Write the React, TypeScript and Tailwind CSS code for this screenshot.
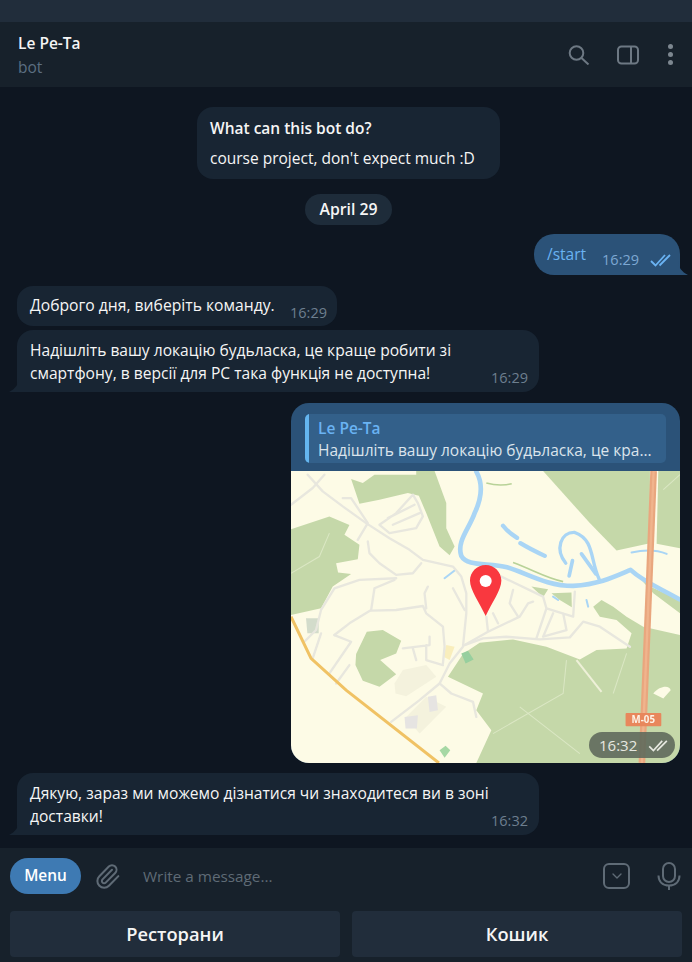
import { Paperclip, ChevronDown } from 'lucide-react'

const font = { fontFamily: '"Open Sans", sans-serif' }

function Checks({ className }: { className: string }) {
  return (
    <svg viewBox="0 0 22 14" fill="none" stroke="currentColor" strokeWidth="1.8" className={className}>
      <path d="M1 8l4.500 4.500L15 2" />
      <path d="M9.500 12.500L20 2" />
    </svg>
  )
}

function TailLeft() {
  return (
    <svg viewBox="0 0 10 14" className="absolute -left-[8px] bottom-0 h-[14px] w-[10px] fill-[#182533]">
      <path d="M10 0C10 6 6 11 0 14H10Z" />
    </svg>
  )
}

function TailRight() {
  return (
    <svg viewBox="0 0 10 14" className="absolute -right-[8px] bottom-0 h-[14px] w-[10px] fill-[#2b5278]">
      <path d="M0 0C0 6 4 11 10 14H0Z" />
    </svg>
  )
}

function MapPreview() {
  return (
    <svg viewBox="35 214 1165 874" preserveAspectRatio="none" className="block h-[292px] w-full bg-[#fdfbe6] blur-[0.4px]">
      {/* woods */}
      <g fill="#c5d8a9">
        <path d="M790 214L1110 214V430L1010 452L930 370Z" />
        <path d="M1135 214H1200V445L1130 432Z" />
        <path d="M215 238L250 250L285 225H410V214H465L500 310L500 385L525 440L510 466L480 440L440 340L418 288L385 280L300 300L240 312Z" />
        <path d="M35 388L150 350L210 376L195 405L240 435L235 478L170 490L176 518L215 522L160 560L125 625L35 645Z" />
        <path d="M230 762L262 695L310 690L365 722L350 760L302 780L350 822L300 860L250 842L228 795Z" />
        <path d="M505 830L550 762L600 728L700 718L800 740L900 778L950 750L1040 745L1055 700L1010 660L960 650L940 620L965 600L1000 620L1040 650L1090 680L1200 705V1088H590L635 990L590 930L610 880Z" />
        <path d="M755 560L805 568L790 592ZM815 580L875 578L876 622L840 600Z" />
        <path d="M1075 530L1110 560L1200 600V640L1120 580Z" />
      </g>
      <g fill="#f4f2dd">
        <path d="M345 850L370 810L440 795L470 830L380 888L348 880Z" />
        <path d="M380 950L440 890L500 920L420 1000Z" />
      </g>
      <path d="M1120 880C1140 855 1170 855 1172 870L1150 895Z" fill="#fdfbe6" />
      <path d="M80 655H118V700H84Z" fill="#d3dccb" />
      <path d="M545 760L565 752L582 778L558 790Z" fill="#97cf9e" />
      <path d="M480 1050L498 1036L512 1050L495 1072Z" fill="#a6d8a4" />
      <path d="M500 735L525 740L510 780L492 770Z" fill="#f9eebc" />
      <path d="M445 890L470 885L475 930L450 935Z M375 950L415 945L412 985L378 985Z" fill="#e6e4e2" />

      {/* water */}
      <g fill="none" stroke="#a9d5f5" strokeLinecap="round" strokeLinejoin="round">
        <path strokeWidth="14" d="M590 216C612 255 604 300 585 340C570 385 530 425 545 468C562 500 625 488 682 502C742 520 800 558 880 558C960 552 1000 532 1052 510C1090 545 1130 560 1198 598" />
        <path strokeWidth="10" d="M958 538C930 480 945 420 885 398C842 396 825 450 858 490" />
        <path strokeWidth="13" d="M670 378C685 398 695 404 712 414M722 430C745 444 760 452 795 468" />
        <path strokeWidth="11" d="M878 482L868 528M905 462L948 522" />
        <path strokeWidth="6" d="M1055 458C1090 450 1130 450 1160 462M495 535L525 512M920 600L925 620M820 590L835 600" />
      </g>
      <path d="M620 250C650 258 670 258 696 252M700 488C760 510 800 535 850 545" fill="none" stroke="#b8d298" strokeWidth="5" />

      {/* streets */}
      <g fill="none" stroke="#e8e7de" strokeWidth="7" strokeLinecap="round" strokeLinejoin="round">
        <path d="M85 225L130 275L190 320L260 370L330 415L390 450L430 480L520 500L545 530L560 580L560 640L550 740L510 790L480 850L420 900L335 965" />
        <path d="M35 315L100 265L135 225M190 295L215 295L265 370L235 420" />
        <path d="M300 375L350 340L400 285L415 310L430 350L410 385L330 400L300 375M325 355L405 315M340 375L420 340" />
        <path d="M265 425L270 460L300 490L350 525L400 520L425 490" />
        <path d="M350 535L240 540L165 565L125 630L110 690L75 725" />
        <path d="M345 540L285 565L275 630L210 670L165 705" />
        <path d="M275 632L350 630L430 618L440 640L490 680L495 740L490 790M440 625L435 580L445 560" />
        <path d="M165 705L215 725L150 820M125 700L100 775M210 795L170 850" />
        <path d="M370 745L450 735L450 710M400 745L410 780M440 735L440 780L490 795" />
        <path d="M480 850L515 880L580 905L590 950" />
        <path d="M555 735L610 715L680 710L780 718L870 712L910 665L960 680L1050 740" />
        <path d="M620 650L625 695L555 735M640 640L655 670M625 695L720 650L745 610L760 605M700 570L690 610L715 650" />
        <path d="M665 530L790 590L800 625L880 650L885 575M800 625L770 715M820 640L790 710L860 690L850 640" />
        <path d="M520 565L555 630" />
      </g>
      <g fill="none" stroke="#dbe7c4" strokeWidth="3">
        <path d="M35 520L120 470L150 400M640 1000L850 880L860 780M720 920L900 1060M1000 880L1040 760M1150 270L1200 225" />
      </g>
      <path d="M890 780L965 875" fill="none" stroke="#eef0d8" strokeWidth="6" />

      {/* motorway + trunk road */}
      <path d="M35 650L95 775L200 870L478 1088" fill="none" stroke="#f0c264" strokeWidth="9" />
      <path d="M1121 214L1086 1088" fill="none" stroke="#e9a67e" strokeWidth="20" />
      <path d="M1121 214L1086 1088" fill="none" stroke="#f0b48d" strokeWidth="7" />
      <rect x="1037" y="938" width="107" height="40" rx="3" fill="#e8875c" />
      <text x="1090" y="968" textAnchor="middle" fontSize="29" fontWeight="700" fill="#fdf3e8">M-05</text>

      {/* pin */}
      <path d="M618 495C592 495 571 516 571 542C571 570 600 610 618 648C636 610 665 570 665 542C665 516 644 495 618 495Z" fill="#f9383f" />
      <circle cx="618" cy="543" r="18" fill="#fff" />
    </svg>
  )
}

export default function App() {
  return (
    <div style={font} className="flex h-[962px] w-[692px] flex-col overflow-hidden bg-[#0e1621] text-[15.5px] text-[#f5f5f5]">
      <div className="h-[22px] shrink-0 bg-[#212d3b]" />

      <header className="flex h-[65px] shrink-0 items-center justify-between bg-[#17212b] pl-[18px] pr-[19px]">
        <div>
          <p className="leading-[20px] font-semibold">Le Pe-Ta</p>
          <p className="mt-[4px] leading-[20px] text-[#5c6f82]">bot</p>
        </div>
        <div className="flex items-center text-[#6d7883]">
          <svg viewBox="0 0 22 20" fill="none" stroke="currentColor" strokeWidth="2" className="h-[20px] w-[22px]">
            <circle cx="8.500" cy="8" r="6.800" />
            <path d="M13.500 13l7 6.500" />
          </svg>
          <svg viewBox="0 0 24 20" fill="none" stroke="currentColor" strokeWidth="2" className="ml-[26px] h-[20px] w-[24px]">
            <rect x="2" y="1.500" width="20" height="17" rx="3.500" />
            <path d="M15 1.500v17" />
          </svg>
          <div className="ml-[28px] flex flex-col gap-[2.500px]">
            <span className="h-[5.500px] w-[5.500px] rounded-full bg-[#7d8790]" />
            <span className="h-[5.500px] w-[5.500px] rounded-full bg-[#7d8790]" />
            <span className="h-[5.500px] w-[5.500px] rounded-full bg-[#7d8790]" />
          </div>
        </div>
      </header>

      <main className="flex min-h-0 flex-1 flex-col pt-[20px]">
        <div className="ml-[197px] flex h-[72px] w-[303px] flex-col justify-center rounded-[16px] bg-[#182533] px-[13px] leading-[20px]">
          <p className="font-semibold">What can this bot do?</p>
          <p className="mt-[10px]">course project, don't expect much :D</p>
        </div>

        <div className="ml-[305px] mt-[15px] flex h-[31px] w-[87px] items-center justify-center rounded-full bg-[#1e2c3a] text-[15.800px] font-semibold">
          April 29
        </div>

        <div className="relative mt-[9px] mr-[12px] flex h-[41px] w-[146px] items-center self-end rounded-l-[20px] rounded-tr-[20px] bg-[#2b5278] pl-[13px]">
          <span className="text-[#6ab3f3]">/start</span>
          <span className="ml-[16px] mt-[10px] text-[14.500px] text-[#7da8d3]">16:29</span>
          <Checks className="ml-[11px] mt-[10px] h-[14px] w-[22px] text-[#6ab3f3]" />
          <TailRight />
        </div>

        <div className="mt-[11px] ml-[17px] flex h-[40px] w-[320px] items-center rounded-[16px] bg-[#182533] pl-[13px]">
          <span className="text-[15.700px]">Доброго дня, виберіть команду.</span>
          <span className="ml-auto mt-[13px] mr-[10px] text-[14.500px] text-[#6d7f8f]">16:29</span>
        </div>

        <div className="relative mt-[4px] ml-[17px] h-[62px] w-[522px] rounded-[16px] rounded-bl-none bg-[#182533] pl-[13px] pt-[9px]">
          <p className="text-[15.600px] leading-[23px]">
            Надішліть вашу локацію будьласка, це краще робити зі
            <br />
            смартфону, в версії для PC така функція не доступна!
          </p>
          <span className="absolute right-[11px] bottom-[3px] text-[14.500px] text-[#6d7f8f]">16:29</span>
          <TailLeft />
        </div>

        <div className="mt-[11px] mr-[12px] w-[389px] self-end overflow-hidden rounded-[18px] bg-[#2b5278]">
          <div className="px-[14px] pt-[11px] pb-[8px]">
            <div className="flex h-[49px] overflow-hidden rounded-[5px] bg-[#33608a]">
              <span className="w-[4px] shrink-0 bg-[#64b5ef]" />
              <div className="whitespace-nowrap pl-[9px] pt-[3px] leading-[22px]">
                <p className="font-semibold text-[#6ab3f3]">Le Pe-Ta</p>
                <p className="text-[#dbe4ec]">Надішліть вашу локацію будьласка, це кра...</p>
              </div>
            </div>
          </div>
          <div className="relative overflow-hidden">
            <MapPreview />
            <div className="absolute right-[5px] bottom-[5px] flex h-[26px] w-[86px] items-center justify-between rounded-full bg-[#5f6a5c]/90 pl-[10px] pr-[6px] text-[15px] text-[#e6e8e0]">
              16:32
              <Checks className="h-[13px] w-[21px] text-[#e6e8e0]" />
            </div>
          </div>
        </div>

        <div className="relative mt-[10px] ml-[17px] h-[62px] w-[522px] rounded-[16px] rounded-bl-none bg-[#182533] pl-[13px] pt-[9px]">
          <p className="text-[15.600px] leading-[23px]">
            Дякую, зараз ми можемо дізнатися чи знаходитеся ви в зоні
            <br />
            доставки!
          </p>
          <span className="absolute right-[11px] bottom-[3px] text-[14.500px] text-[#6d7f8f]">16:32</span>
          <TailLeft />
        </div>
      </main>

      <footer className="shrink-0 bg-[#17212b]">
        <div className="flex h-[56px] items-center pl-[10px] pr-[11px]">
          <button className="h-[36px] w-[71px] rounded-full bg-[#3e7ab3] text-[15.400px] font-semibold text-white">Menu</button>
          <Paperclip className="ml-[13px] h-[27px] w-[27px] text-[#5f6b76]" strokeWidth={1.8} />
          <span className="ml-[22px] text-[15.300px] text-[#5f6b76]">Write a message...</span>
          <div className="ml-auto flex h-[26px] w-[27px] items-center justify-center rounded-[6px] border-2 border-[#5f6b76] text-[#5f6b76]">
            <ChevronDown className="h-[16px] w-[16px]" strokeWidth={2} />
          </div>
          <svg viewBox="0 0 24 28" fill="none" stroke="currentColor" strokeWidth="2" className="ml-[27px] h-[28px] w-[24px] text-[#5f6b76]">
            <rect x="6" y="1" width="12" height="19" rx="6" />
            <path d="M1.500 13.500C1.500 20 6 23.500 12 23.500S22.500 20 22.500 13.500M12 23.500V28" />
          </svg>
        </div>
        <div className="mt-[7px] grid h-[51px] grid-cols-2 gap-[12px] px-[10px] pb-[5px]">
          <button className="rounded-[4px] bg-[#212d3b] text-[18.300px] font-semibold text-[#f5f5f5]">Ресторани</button>
          <button className="rounded-[4px] bg-[#212d3b] text-[18.300px] font-semibold text-[#f5f5f5]">Кошик</button>
        </div>
      </footer>
    </div>
  )
}
